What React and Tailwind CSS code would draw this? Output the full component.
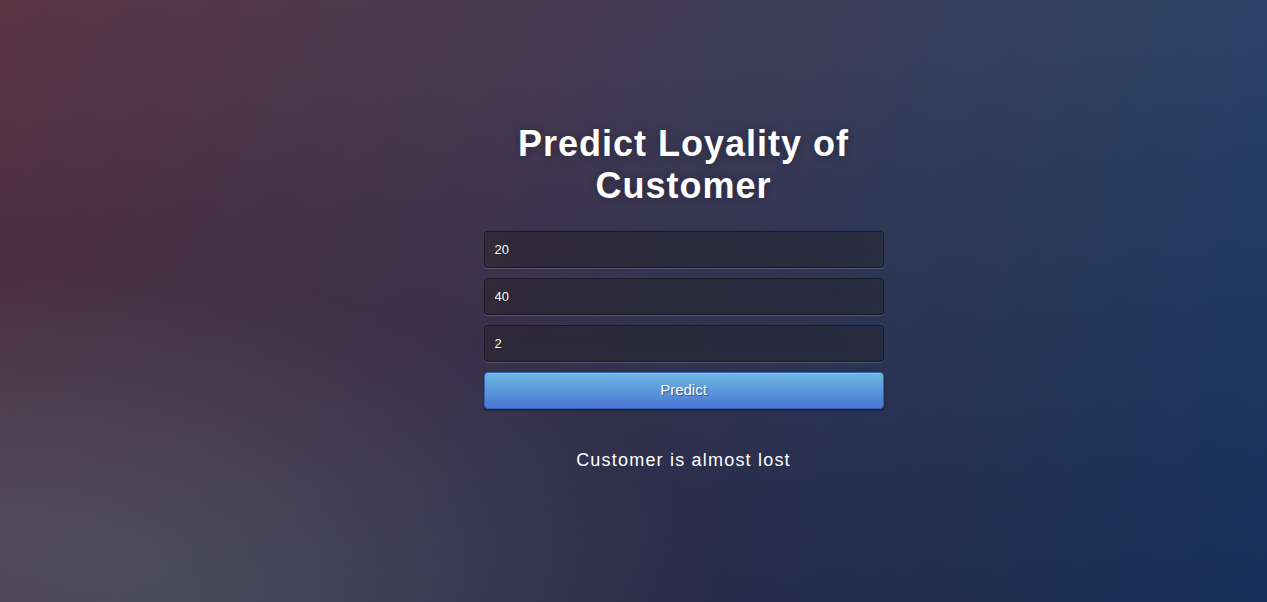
import React from 'react';

// Campo de entrada con el estilo oscuro del formulario
const Field = ({ value }) => (
  <input
    type="text"
    defaultValue={value}
    className="block w-full h-[37px] mb-[10px] px-[10px] rounded-[4px] border border-black/30 bg-black/30 text-white text-[13px] outline-none [text-shadow:1px_1px_1px_rgba(0,0,0,0.3)] shadow-[inset_0_-5px_45px_rgba(100,100,100,0.2),0_1px_1px_rgba(255,255,255,0.2)]"
  />
);

export default function App() {
  return (
    <div
      className="min-h-screen w-full overflow-hidden bg-[#092756] bg-[radial-gradient(ellipse_farthest-corner_at_0%_100%,rgba(104,128,138,.4)_10%,rgba(138,114,76,0)_40%),linear-gradient(to_bottom,rgba(57,173,219,.25)_0%,rgba(42,60,87,.4)_100%),linear-gradient(135deg,#670d10_0%,#092756_100%)]"
      style={{ fontFamily: '"Liberation Sans", Arial, sans-serif' }}
    >
      <div className="ml-[calc(50%-150px)] w-[400px] pt-[123px]">
        <h1 className="text-center text-white text-[36px] font-bold leading-[42px] tracking-[1px] [text-shadow:0_0_10px_rgba(0,0,0,0.3)] mb-[24px]">
          Predict Loyality of Customer
        </h1>

        <form onSubmit={(e) => e.preventDefault()}>
          <Field value="20" />
          <Field value="40" />
          <Field value="2" />
          <button
            type="submit"
            className="block w-full h-[37px] rounded-[4px] border border-[#3762bc] bg-[#4a77d4] bg-gradient-to-b from-[#6eb6de] to-[#4a77d4] text-white text-[15px] [text-shadow:1px_1px_1px_rgba(0,0,0,0.4)] shadow-[inset_0_1px_0_rgba(255,255,255,0.2),0_1px_2px_rgba(0,0,0,0.5)]"
          >
            Predict
          </button>
        </form>

        <p className="mt-[38px] text-center text-white text-[18px] tracking-[1.2px]">
          Customer is almost lost
        </p>
      </div>
    </div>
  );
}
